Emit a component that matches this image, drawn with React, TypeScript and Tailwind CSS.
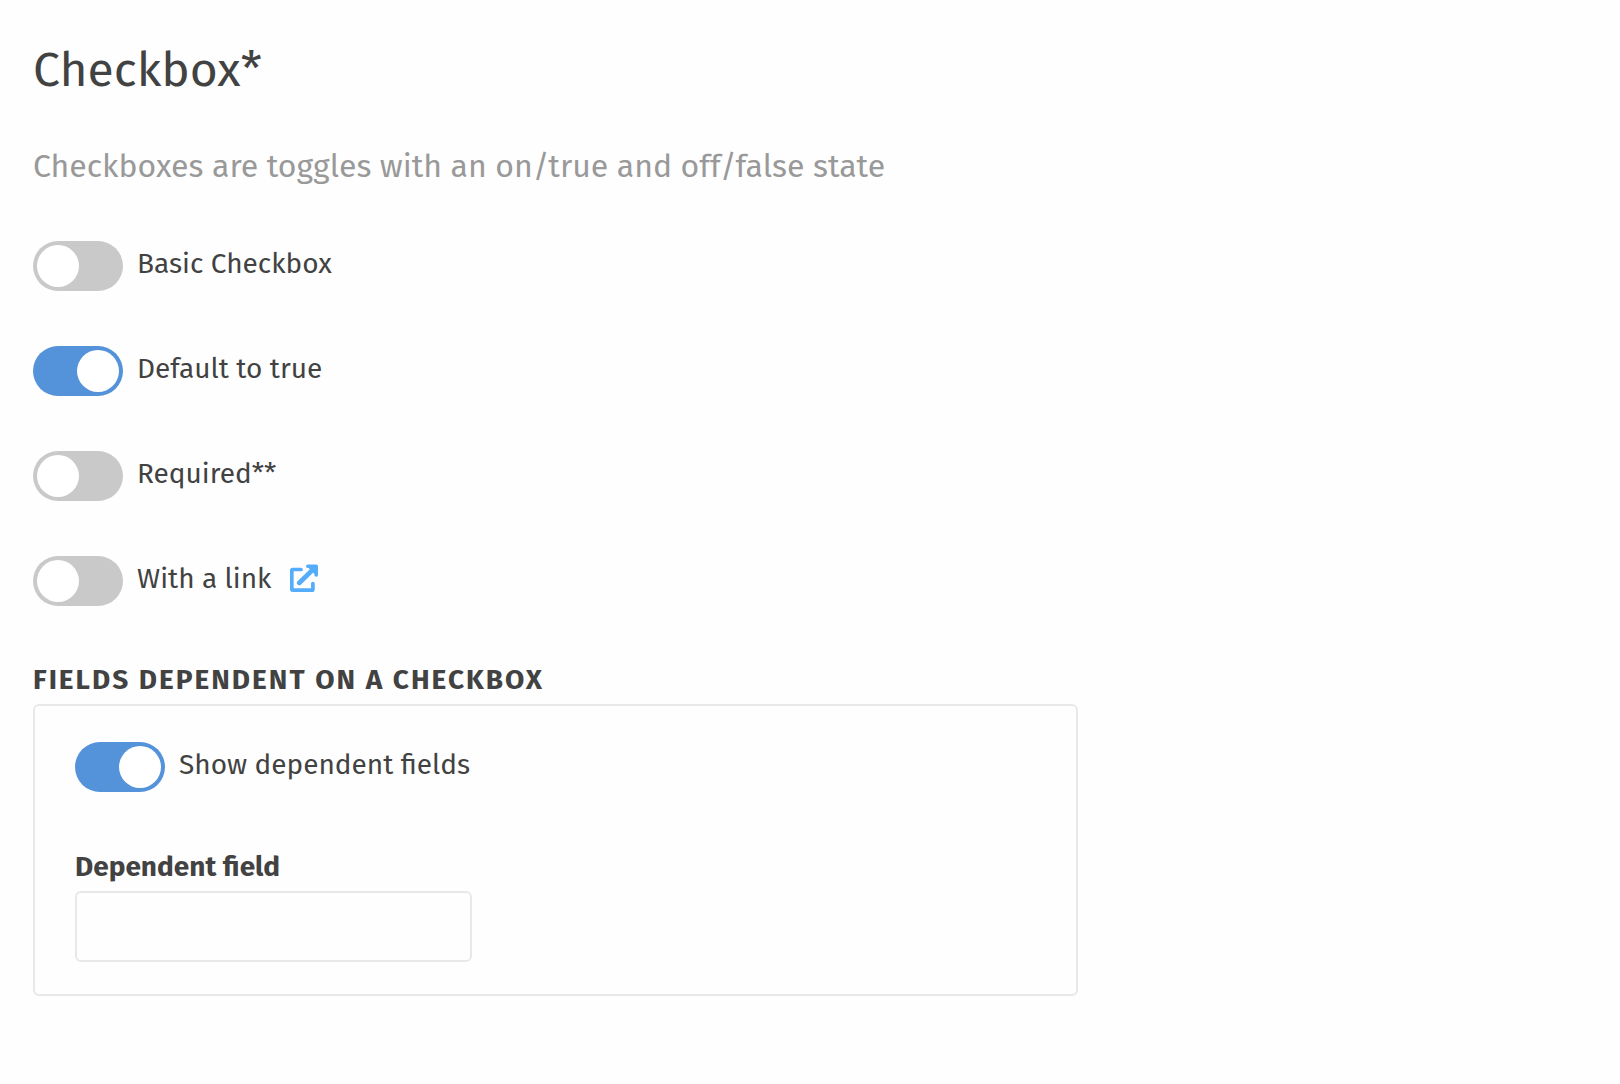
import { useState } from "react";
import type { ReactNode } from "react";

type ToggleProps = {
  id: string;
  label: string;
  defaultOn?: boolean;
  onToggle?: (on: boolean) => void;
  children?: ReactNode;
};

function Toggle({ id, label, defaultOn = false, onToggle, children }: ToggleProps) {
  return (
    <div className="flex items-center">
      <input
        id={id}
        type="checkbox"
        role="switch"
        defaultChecked={defaultOn}
        onChange={(e) => onToggle?.(e.target.checked)}
        className="flex h-[50px] w-[90px] shrink-0 cursor-pointer appearance-none items-center rounded-full bg-[#c9c9c9] p-1 before:block before:size-[42px] before:rounded-full before:bg-white before:content-[''] checked:justify-end checked:bg-[#5492d9]"
      />
      <label htmlFor={id} className="cursor-pointer pb-1 pl-[14px] text-[28px] leading-9">
        {label}
      </label>
      {children}
    </div>
  );
}

function ExternalLinkIcon() {
  return (
    <svg viewBox="0 0 28 29" className="h-[29px] w-7" fill="none" stroke="currentColor" aria-hidden="true">
      <path d="M11 5.5H2.8Q1.8 5.5 1.8 6.5V25.2Q1.8 26.2 2.8 26.2H21.9Q22.9 26.2 22.9 25.2V19.5" strokeWidth="3.7" strokeLinecap="round" />
      <path d="M9.2 19 25 3.5" strokeWidth="4.6" strokeLinecap="round" />
      <path d="M17.8 2.2H26.2V11" strokeWidth="3.6" strokeLinecap="round" strokeLinejoin="round" />
      <path d="M18 3H25.5V10.5Z" fill="currentColor" strokeWidth="1" />
    </svg>
  );
}

export default function App() {
  const [showDependent, setShowDependent] = useState(true);

  return (
    <main className="min-h-screen bg-[#fefefe] px-[33px] pt-[38px] font-['Fira_Sans','Noto_Sans',sans-serif] text-[#424242]">
      <h1 className="text-5xl leading-[64px]">Checkbox*</h1>
      <p className="mt-[42px] text-[32px] leading-[44px] text-[#999999]">
        Checkboxes are toggles with an on/true and off/false state
      </p>

      <div className="mt-[53px] flex flex-col gap-[55px]">
        <Toggle id="basic" label="Basic Checkbox" />
        <Toggle id="default-true" label="Default to true" defaultOn />
        <Toggle id="required" label="Required**" />
        <Toggle id="with-link" label="With a link">
          <a href="#link" aria-label="Open link" className="ml-[19px] pb-[6px] text-[#54acfa]">
            <ExternalLinkIcon />
          </a>
        </Toggle>
      </div>

      <h2 className="mt-14 text-[28px] leading-9 font-bold tracking-[2px] uppercase">Fields dependent on a checkbox</h2>
      <section className="mt-[6px] max-w-[1045px] rounded-md border-2 border-[#e8e8e8] px-10 pt-9 pb-8">
        <Toggle id="show-dependent" label="Show dependent fields" defaultOn onToggle={setShowDependent} />
        {showDependent && (
          <div className="mt-[57px] flex flex-col">
            <label htmlFor="dependent" className="text-[28px] leading-9 font-bold">
              Dependent field
            </label>
            <input
              id="dependent"
              type="text"
              className="mt-[6px] h-[71px] w-full max-w-[397px] rounded-md border-2 border-[#e8e8e8] bg-transparent px-4 text-[28px] outline-none"
            />
          </div>
        )}
      </section>
    </main>
  );
}
